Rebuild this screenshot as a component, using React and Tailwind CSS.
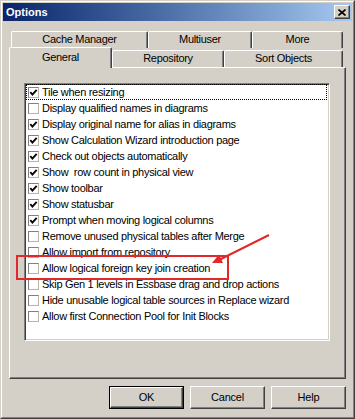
import React from 'react';

const OPTIONS = [
  { label: 'Tile when resizing', checked: true },
  { label: 'Display qualified names in diagrams', checked: false },
  { label: 'Display original name for alias in diagrams', checked: true },
  { label: 'Show Calculation Wizard introduction page', checked: true },
  { label: 'Check out objects automatically', checked: true },
  { label: 'Show  row count in physical view', checked: true },
  { label: 'Show toolbar', checked: true },
  { label: 'Show statusbar', checked: true },
  { label: 'Prompt when moving logical columns', checked: true },
  { label: 'Remove unused physical tables after Merge', checked: false },
  { label: 'Allow import from repository', checked: false },
  { label: 'Allow logical foreign key join creation', checked: false },
  { label: 'Skip Gen 1 levels in Essbase drag and drop actions', checked: false },
  { label: 'Hide unusable logical table sources in Replace wizard', checked: false },
  { label: 'Allow first Connection Pool for Init Blocks', checked: false },
];

// back row of tabs
const BACK_TABS = [
  { label: 'Cache Manager', w: 'w-[137px]' },
  { label: 'Multiuser', w: 'w-[104px]' },
  { label: 'More', w: 'w-[91px]' },
];

function CheckBox({ checked }) {
  return (
    <div className="w-[11px] h-[11px] shrink-0 bg-white border border-t-[#808080] border-l-[#808080] border-r-[#b8b4ac] border-b-[#b8b4ac] flex items-center justify-center">
      {checked && (
        <svg width="9" height="9" viewBox="0 0 9 9">
          <polyline points="1.3,4.2 3.4,6.6 7.7,1.8" fill="none" stroke="#000" strokeWidth="1.8" />
        </svg>
      )}
    </div>
  );
}

function Tab({ label, className }) {
  return (
    <div
      className={`flex items-center justify-center bg-[#d4d0c8] border-t border-l border-r border-t-white border-l-white border-r-[#404040] shadow-[inset_-1px_0_#808080] rounded-t-[2px] ${className}`}
    >
      <span className="tracking-[-0.3px]">{label}</span>
    </div>
  );
}

function Button({ label, isDefault }) {
  return (
    <div className={`w-[75px] h-[23px] ${isDefault ? 'border border-black' : ''}`}>
      <div className="w-full h-full flex items-center justify-center bg-[#d4d0c8] border border-t-white border-l-white border-r-[#404040] border-b-[#404040] shadow-[inset_-1px_-1px_#808080]">
        <span className="tracking-[-0.2px]">{label}</span>
      </div>
    </div>
  );
}

export default function App() {
  return (
    <div
      className="relative w-[355px] h-[419px] bg-[#d4d0c8] text-[11px] text-black border border-t-[#d4d0c8] border-l-[#d4d0c8] border-r-[#404040] border-b-[#404040]"
      style={{ fontFamily: '"Liberation Sans", Arial, sans-serif' }}
    >
      <div className="w-full h-full border border-t-white border-l-white border-r-[#808080] border-b-[#808080] p-[1px] flex flex-col">
        {/* Title bar */}
        <div className="h-[18px] flex items-center justify-between pl-[3px] pr-[2px] bg-gradient-to-r from-[#0a246a] to-[#a6caf0]">
          <span className="font-bold text-white">Options</span>
          <div className="w-[16px] h-[14px] flex items-center justify-center bg-[#d4d0c8] border border-t-white border-l-white border-r-[#404040] border-b-[#404040] shadow-[inset_-1px_-1px_#808080]">
            <svg width="8" height="7" viewBox="0 0 8 7">
              <path d="M0.5 0.5 L7.5 6.5 M7.5 0.5 L0.5 6.5" stroke="#000" strokeWidth="1.6" />
            </svg>
          </div>
        </div>

        <div className="px-[6px] flex flex-col">
          {/* Tabs */}
          <div className="mt-[10px] ml-[2px] flex h-[17px]">
            {BACK_TABS.map((t) => (
              <Tab key={t.label} label={t.label} className={`${t.w} h-[17px] pb-[1px]`} />
            ))}
          </div>
          <div className="flex items-end h-[19px]">
            <Tab label="General" className="w-[103px] h-[21px] relative top-[1px] z-10 pb-[2px]" />
            <Tab label="Repository" className="w-[112px] h-[17px] pb-[1px]" />
            <Tab label="Sort Objects" className="w-[119px] h-[17px] pb-[1px]" />
          </div>

          {/* Panel */}
          <div className="h-[312px] border border-t-white border-l-white border-r-[#404040] border-b-[#404040] shadow-[inset_-1px_-1px_#808080] pt-[15px] pl-[14px]">
            <div className="w-[306px] h-[258px] bg-white border border-t-[#808080] border-l-[#808080] border-r-white border-b-white shadow-[inset_1px_1px_#404040,inset_-1px_-1px_#d4d0c8] p-[1px]">
              <div className="flex flex-col -mt-[1px]">
                {OPTIONS.map((o, i) => (
                  <div
                    key={o.label}
                    className={`h-[16px] flex items-center gap-[3px] pl-[1px] mr-[1px] border border-dotted ${i === 0 ? 'border-black' : 'border-transparent'}`}
                  >
                    <CheckBox checked={o.checked} />
                    <span className="whitespace-pre tracking-[-0.3px]">{o.label}</span>
                  </div>
                ))}
              </div>
            </div>
          </div>

          {/* Buttons */}
          <div className="mt-[7px] flex justify-end gap-[6px]">
            <Button label="OK" isDefault />
            <Button label="Cancel" />
            <Button label="Help" />
          </div>
        </div>
      </div>

      {/* Red annotation */}
      <div className="absolute left-[15px] top-[254px] w-[213px] h-[25px] border-2 border-[#e02a2a]" />
      <svg className="absolute left-0 top-0 pointer-events-none" width="355" height="419">
        <line x1="268" y1="234" x2="219" y2="258.5" stroke="#e02a2a" strokeWidth="2" />
        <polygon points="211,262 222,262 218,253.5" fill="#e02a2a" />
      </svg>
    </div>
  );
}
